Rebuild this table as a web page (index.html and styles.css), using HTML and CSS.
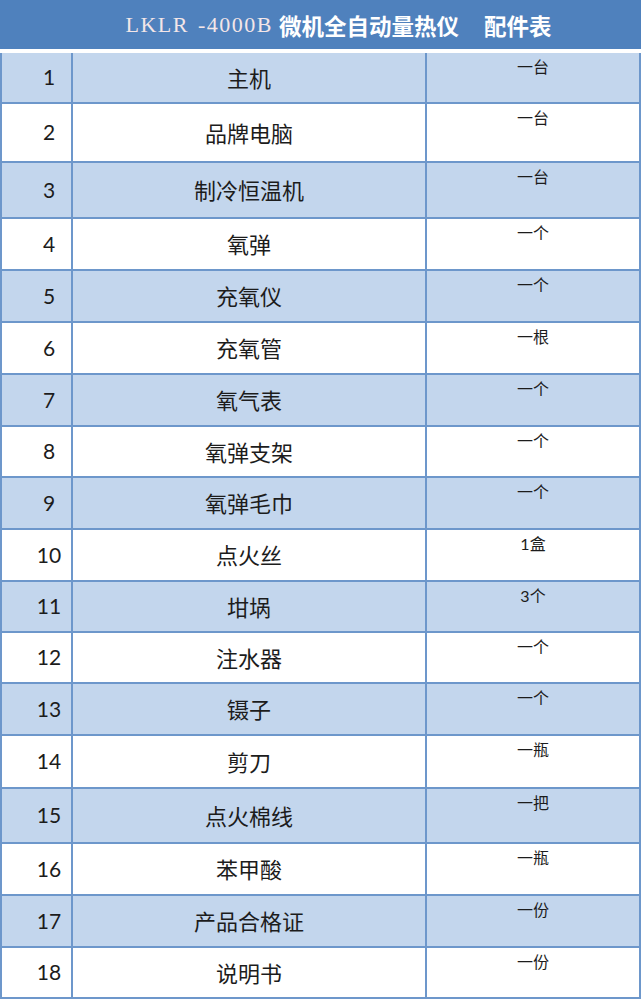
FILE: index.html
```html
<!DOCTYPE html>
<html lang="zh-CN">
<head>
<meta charset="utf-8">
<title>LKLR-4000B 微机全自动量热仪 配件表</title>
<link rel="stylesheet" href="styles.css">
</head>
<body>
<div class="page">
  <div class="title">
    <span class="model">LKLR -4000B</span><span class="name">微机全自动量热仪</span><span class="name sub">配件表</span>
  </div>
  <div class="sheet">
    <div class="row band"><div class="no">1</div><div class="item">主机</div><div class="qty">一台</div></div>
    <div class="row"><div class="no">2</div><div class="item">品牌电脑</div><div class="qty">一台</div></div>
    <div class="row band"><div class="no">3</div><div class="item">制冷恒温机</div><div class="qty">一台</div></div>
    <div class="row"><div class="no">4</div><div class="item">氧弹</div><div class="qty">一个</div></div>
    <div class="row band"><div class="no">5</div><div class="item">充氧仪</div><div class="qty">一个</div></div>
    <div class="row"><div class="no">6</div><div class="item">充氧管</div><div class="qty">一根</div></div>
    <div class="row band"><div class="no">7</div><div class="item">氧气表</div><div class="qty">一个</div></div>
    <div class="row"><div class="no">8</div><div class="item">氧弹支架</div><div class="qty">一个</div></div>
    <div class="row band"><div class="no">9</div><div class="item">氧弹毛巾</div><div class="qty">一个</div></div>
    <div class="row"><div class="no">10</div><div class="item">点火丝</div><div class="qty">1盒</div></div>
    <div class="row band"><div class="no">11</div><div class="item">坩埚</div><div class="qty">3个</div></div>
    <div class="row"><div class="no">12</div><div class="item">注水器</div><div class="qty">一个</div></div>
    <div class="row band"><div class="no">13</div><div class="item">镊子</div><div class="qty">一个</div></div>
    <div class="row"><div class="no">14</div><div class="item">剪刀</div><div class="qty">一瓶</div></div>
    <div class="row band"><div class="no">15</div><div class="item">点火棉线</div><div class="qty">一把</div></div>
    <div class="row"><div class="no">16</div><div class="item">苯甲酸</div><div class="qty">一瓶</div></div>
    <div class="row band"><div class="no">17</div><div class="item">产品合格证</div><div class="qty">一份</div></div>
    <div class="row"><div class="no">18</div><div class="item">说明书</div><div class="qty">一份</div></div>
  </div>
</div>
</body>
</html>
```

FILE: styles.css
```css
html, body {
  margin: 0;
  padding: 0;
  background: #ffffff;
}

.page {
  width: 641px;
}

.title {
  height: 49px;
  background: #4f81bd;
  display: flex;
  align-items: center;
  justify-content: center;
  padding-left: 36px;
  box-sizing: border-box;
  margin-bottom: 4px;
}

.model {
  font-family: "Liberation Serif", serif;
  font-size: 22px;
  letter-spacing: 1.5px;
  word-spacing: 2px;
  color: #f4e6e8;
  margin-right: 6px;
}

.name {
  font-family: "Noto Sans CJK SC", sans-serif;
  font-weight: 700;
  font-size: 22.5px;
  color: #ffffff;
}

.name.sub {
  margin-left: 25px;
}

.sheet {
  display: grid;
  grid-template-columns: 69px 352px 212px;
  grid-template-rows: 49px 57px 54px 50px 50px 50px 50px 49px 50px 50px 49px 49px 50px 51px 53px 50px 50px 49px;
  gap: 2px;
  padding: 0 2px 2px 2px;
  background: #6d97cb;
}

.row {
  display: contents;
}

.row > div {
  background: #ffffff;
  color: #1c1c1c;
}

.row.band > div {
  background: #c3d6ed;
}

.no {
  display: flex;
  align-items: center;
  justify-content: center;
  padding: 0 0 2px 25px;
  font-family: Lato, "Noto Sans CJK SC", sans-serif;
  font-size: 21px;
}

.item {
  display: flex;
  align-items: center;
  justify-content: center;
  padding-bottom: 2px;
  font-family: "Noto Sans CJK SC", sans-serif;
  font-size: 22px;
}

.qty {
  text-align: center;
  padding-top: 4px;
  font-family: Lato, "Noto Sans CJK SC", sans-serif;
  font-size: 16px;
  line-height: 1.2;
}
```
